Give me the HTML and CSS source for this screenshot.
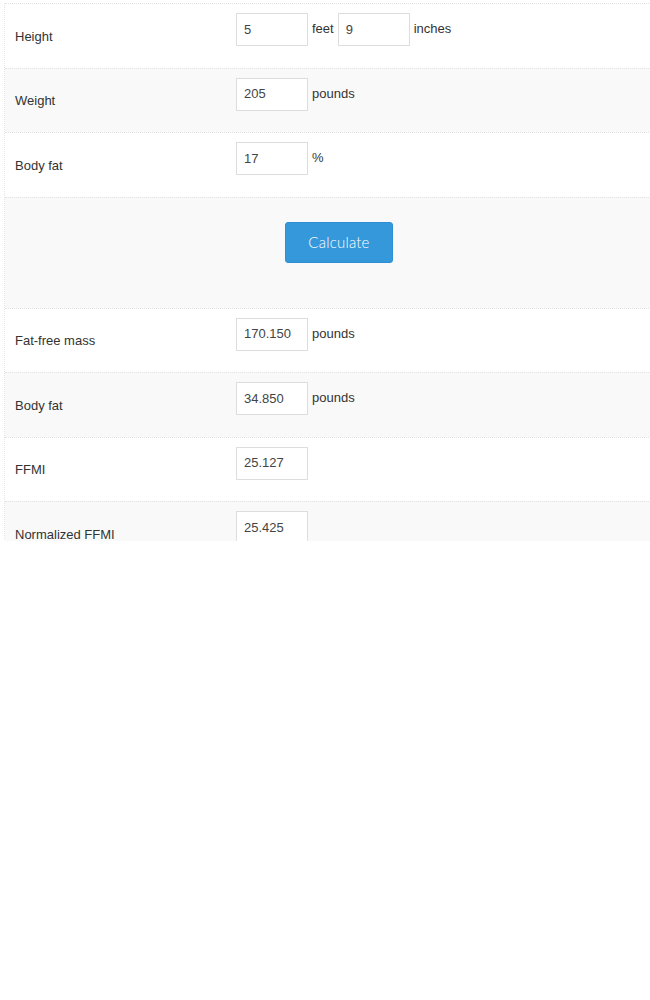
FILE: index.html
```html
<!DOCTYPE html>
<html lang="en">
<head>
<meta charset="utf-8">
<title>FFMI Calculator</title>
<link rel="stylesheet" href="styles.css">
</head>
<body>
<div class="frame">
  <form class="calc">
    <div class="row">
      <div class="label">Height</div>
      <div class="field">
        <input class="num" type="text" value="5"><span class="unit">feet</span>
        <input class="num" type="text" value="9"><span class="unit">inches</span>
      </div>
    </div>
    <div class="row alt">
      <div class="label">Weight</div>
      <div class="field"><input class="num" type="text" value="205"><span class="unit">pounds</span></div>
    </div>
    <div class="row">
      <div class="label">Body fat</div>
      <div class="field"><input class="num" type="text" value="17"><span class="unit">%</span></div>
    </div>
    <div class="row alt action">
      <button class="btn" type="button">Calculate</button>
    </div>
    <div class="row">
      <div class="label">Fat-free mass</div>
      <div class="field"><input class="num" type="text" value="170.150"><span class="unit">pounds</span></div>
    </div>
    <div class="row alt">
      <div class="label">Body fat</div>
      <div class="field"><input class="num" type="text" value="34.850"><span class="unit">pounds</span></div>
    </div>
    <div class="row">
      <div class="label">FFMI</div>
      <div class="field"><input class="num" type="text" value="25.127"></div>
    </div>
    <div class="row alt">
      <div class="label">Normalized FFMI</div>
      <div class="field"><input class="num" type="text" value="25.425"></div>
    </div>
  </form>
</div>
</body>
</html>
```

FILE: styles.css
```css
html, body {
  margin: 0;
  background: #fff;
}

body {
  font-family: "Liberation Sans", Arial, Helvetica, sans-serif;
  font-size: 13px;
  color: #333;
}

.frame {
  height: 541px;
  overflow: hidden;
  padding: 3px 0 0 4px;
  box-sizing: border-box;
}

.calc {
  width: 668px;
  margin: 0;
  border-left: 1px dotted #e6e6e6;
}

.row {
  display: grid;
  grid-template-columns: 231px 1fr;
  height: 64.5px;
  box-sizing: border-box;
  border-top: 1px dotted #e2e2e2;
  background: #fff;
}

.row.alt {
  background: #f9f9f9;
}

.label {
  align-self: center;
  padding: 1px 0 0 10px;
}

.field {
  display: flex;
  align-items: center;
  align-self: start;
  gap: 4px;
  padding-top: 9px;
}

.num {
  width: 72px;
  height: 33px;
  box-sizing: border-box;
  margin: 0;
  padding: 0 0 1px 7px;
  border: 1px solid #ddd;
  border-radius: 0;
  background: #fff;
  font-family: "Liberation Sans", Arial, Helvetica, sans-serif;
  font-size: 13px;
  color: #444;
  outline: none;
}

.unit {
  padding-bottom: 2px;
}

.action {
  display: flex;
  justify-content: center;
  align-items: flex-start;
  height: 111px;
  padding-top: 24px;
}

.btn {
  width: 108px;
  height: 41px;
  border: 1px solid #2f8fd4;
  border-radius: 3px;
  background: #3498db;
  color: #fff;
  font-family: Lato, "Open Sans", sans-serif;
  font-weight: 300;
  font-size: 15px;
  letter-spacing: 0.2px;
  cursor: pointer;
}
```
